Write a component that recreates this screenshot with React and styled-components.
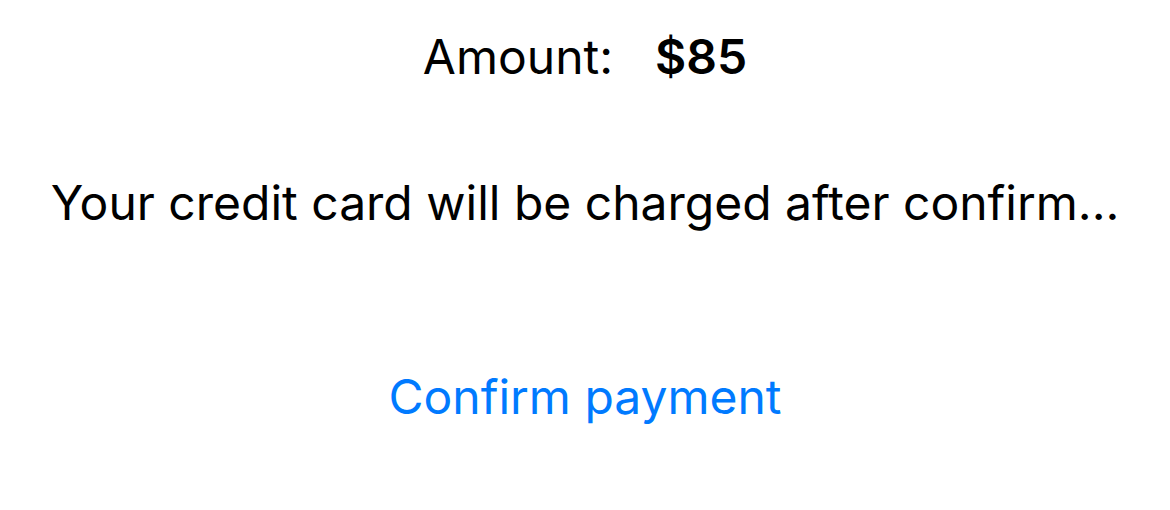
import React from "react";
import styled, { createGlobalStyle } from "styled-components";

const GlobalStyle = createGlobalStyle`
  html, body {
    margin: 0;
    padding: 0;
    background: #ffffff;
  }
  body {
    font-family: Inter, "Noto Sans", "Liberation Sans", sans-serif;
    color: #000000;
    -webkit-font-smoothing: antialiased;
  }
`;

const Screen = styled.div`
  display: flex;
  flex-direction: column;
  align-items: center;
  width: 1170px;
  height: 510px;
  padding-top: 28px;
  box-sizing: border-box;
`;

const AmountRow = styled.div`
  display: flex;
  align-items: baseline;
  gap: 42px;
  font-size: 48px;
  line-height: 58px;
`;

const Label = styled.span`
  font-weight: 400;
`;

const Value = styled.span`
  font-weight: 600;
`;

const Notice = styled.div`
  margin-top: 88px;
  font-size: 48px;
  line-height: 58px;
  text-align: center;
  white-space: nowrap;
`;

const ConfirmButton = styled.button`
  margin-top: 136px;
  border: none;
  background: transparent;
  padding: 0;
  font-family: inherit;
  font-size: 48px;
  line-height: 58px;
  color: #007aff;
  cursor: pointer;
`;

export default function App() {
  return (
    <>
      <GlobalStyle />
      <Screen>
        <AmountRow>
          <Label>Amount:</Label>
          <Value>$85</Value>
        </AmountRow>
        <Notice>Your credit card will be charged after confirm...</Notice>
        <ConfirmButton>Confirm payment</ConfirmButton>
      </Screen>
    </>
  );
}
